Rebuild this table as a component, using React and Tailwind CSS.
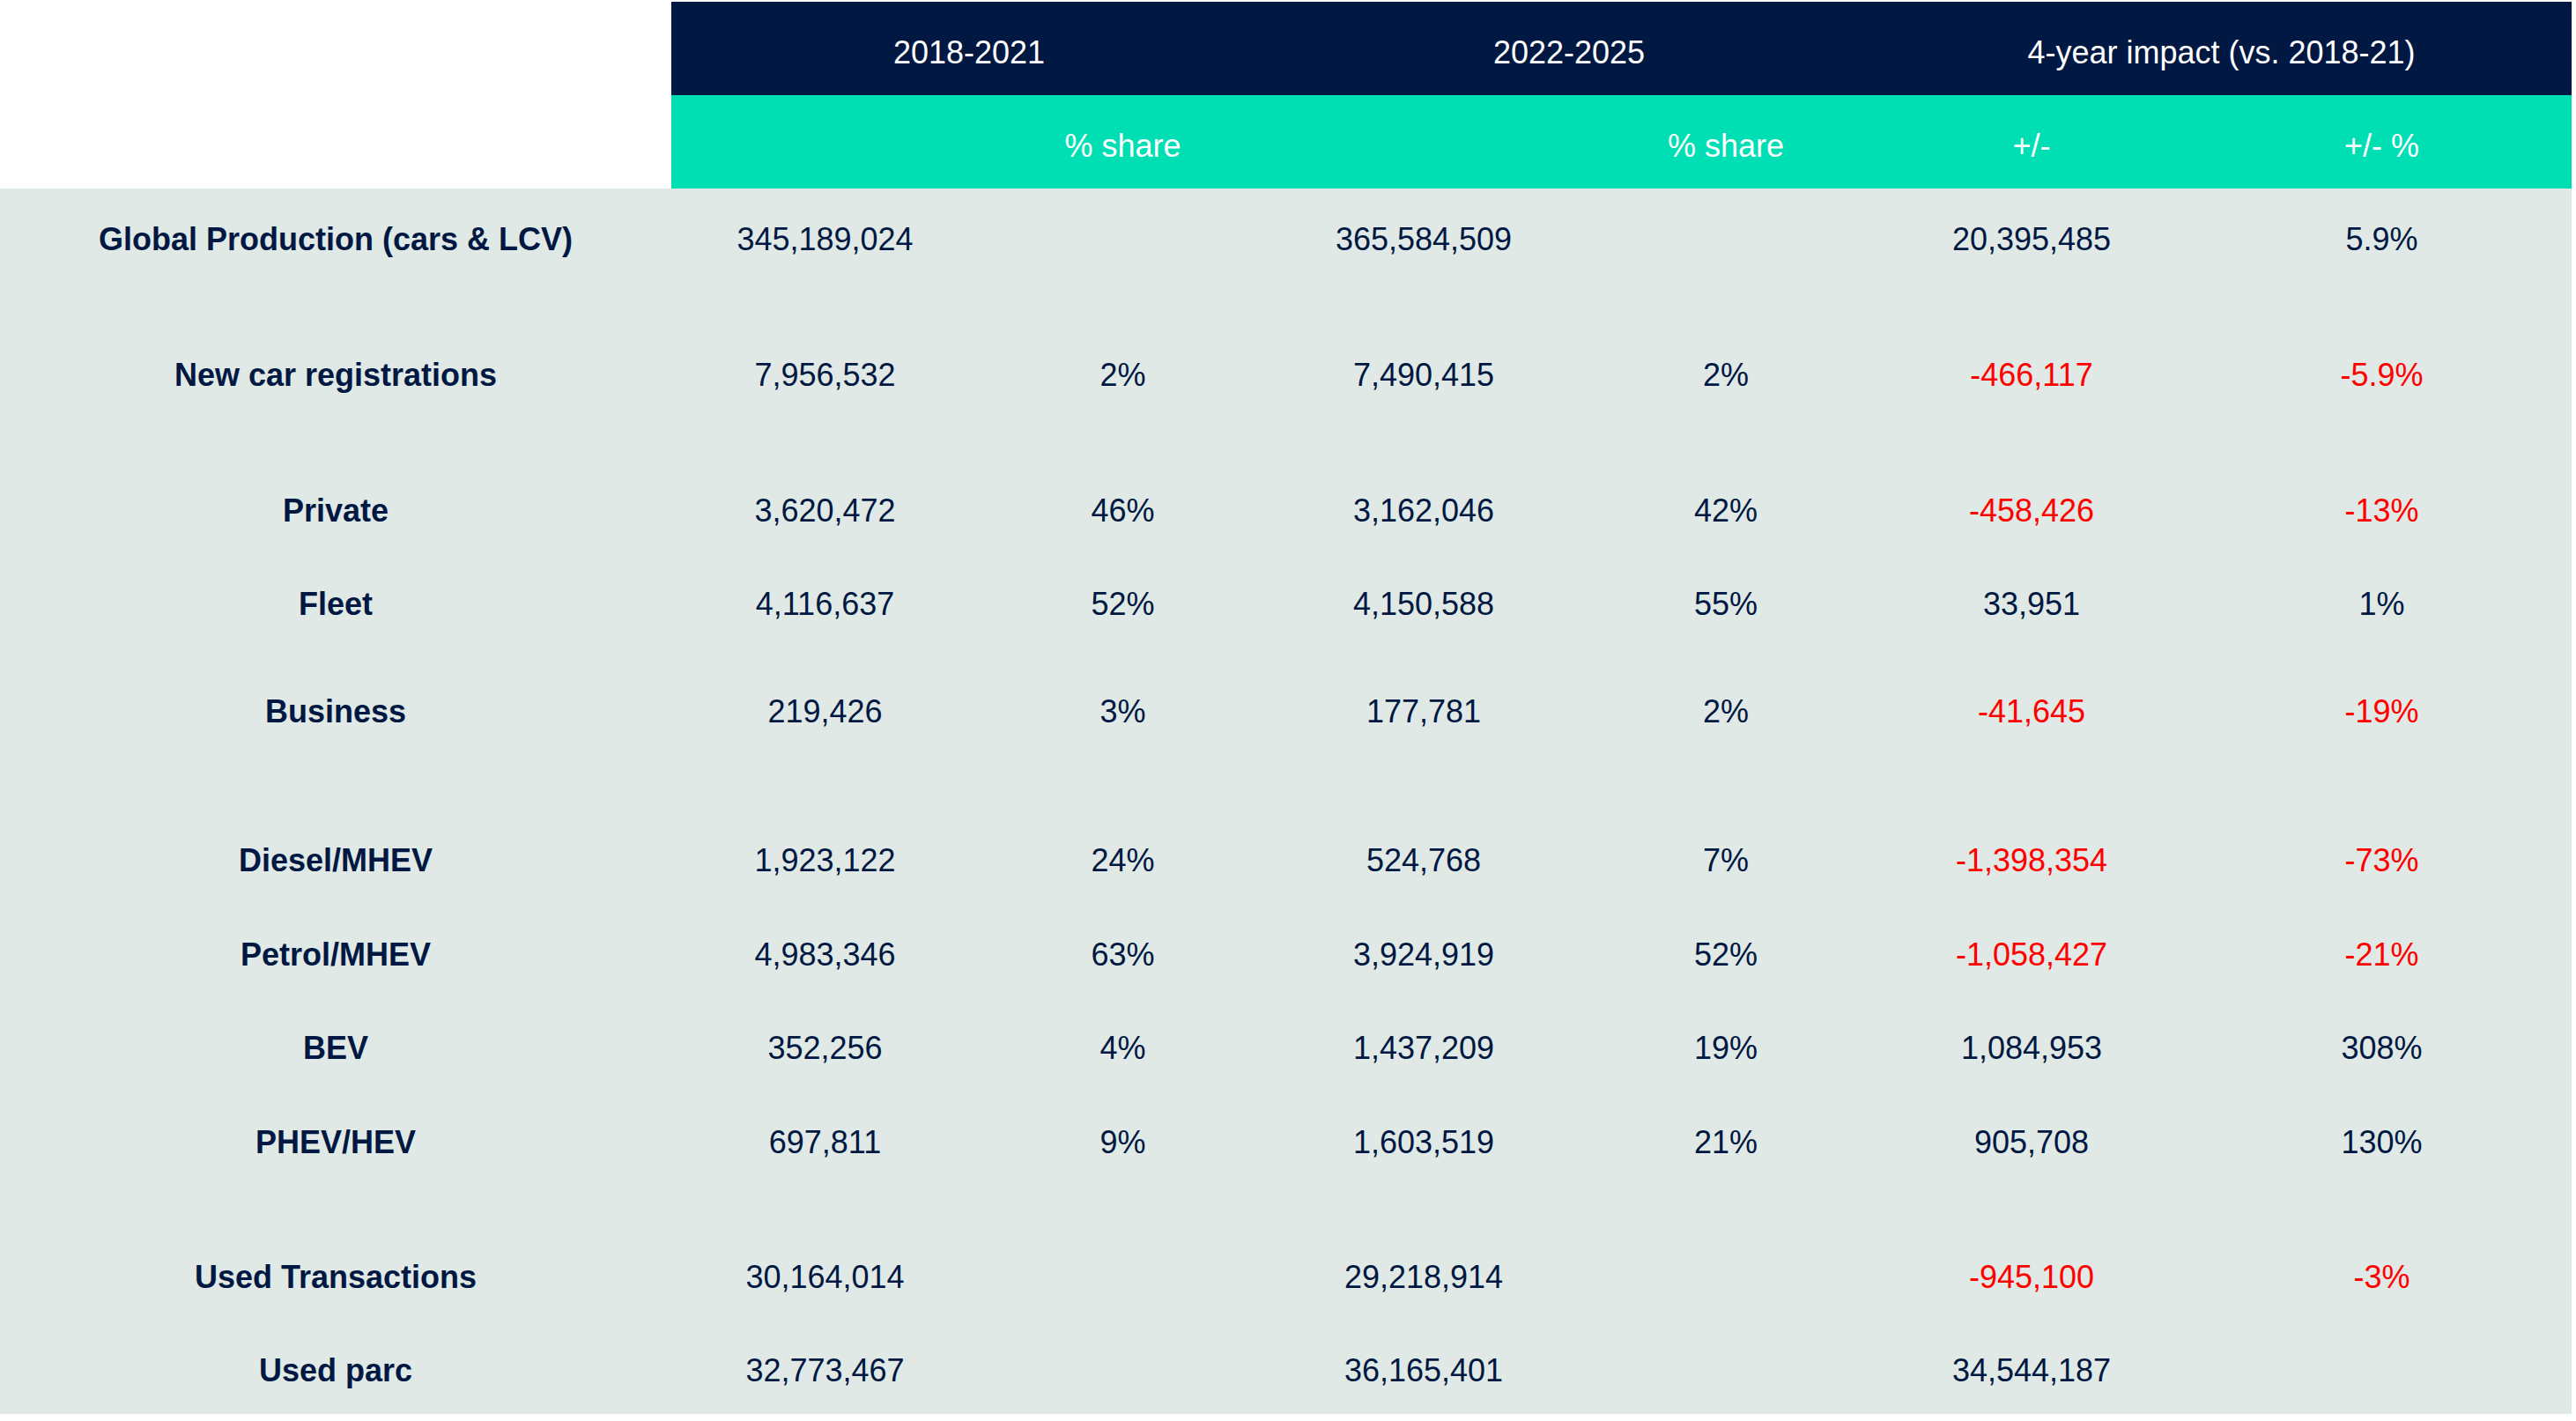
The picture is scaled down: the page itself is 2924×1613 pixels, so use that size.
import React from "react";

const NAVY = "text-[#001842]";
const RED = "text-[#ff0000]";

// Table rows: [label, v1, s1, v2, s2, diff, diffPct, negative, marginTop]
const rows = [
  { label: "Global Production (cars & LCV)", v1: "345,189,024", s1: "", v2: "365,584,509", s2: "", d: "20,395,485", dp: "5.9%", neg: false, mt: "mt-0" },
  { label: "New car registrations", v1: "7,956,532", s1: "2%", v2: "7,490,415", s2: "2%", d: "-466,117", dp: "-5.9%", neg: true, mt: "mt-[48px]" },
  { label: "Private", v1: "3,620,472", s1: "46%", v2: "3,162,046", s2: "42%", d: "-458,426", dp: "-13%", neg: true, mt: "mt-[48px]" },
  { label: "Fleet", v1: "4,116,637", s1: "52%", v2: "4,150,588", s2: "55%", d: "33,951", dp: "1%", neg: false, mt: "mt-0" },
  { label: "Business", v1: "219,426", s1: "3%", v2: "177,781", s2: "2%", d: "-41,645", dp: "-19%", neg: true, mt: "mt-[16px]" },
  { label: "Diesel/MHEV", v1: "1,923,122", s1: "24%", v2: "524,768", s2: "7%", d: "-1,398,354", dp: "-73%", neg: true, mt: "mt-[63px]" },
  { label: "Petrol/MHEV", v1: "4,983,346", s1: "63%", v2: "3,924,919", s2: "52%", d: "-1,058,427", dp: "-21%", neg: true, mt: "mt-[1px]" },
  { label: "BEV", v1: "352,256", s1: "4%", v2: "1,437,209", s2: "19%", d: "1,084,953", dp: "308%", neg: false, mt: "mt-0" },
  { label: "PHEV/HEV", v1: "697,811", s1: "9%", v2: "1,603,519", s2: "21%", d: "905,708", dp: "130%", neg: false, mt: "mt-[1px]" },
  { label: "Used Transactions", v1: "30,164,014", s1: "", v2: "29,218,914", s2: "", d: "-945,100", dp: "-3%", neg: true, mt: "mt-[47px]" },
  { label: "Used parc", v1: "32,773,467", s1: "", v2: "36,165,401", s2: "", d: "34,544,187", dp: "", neg: false, mt: "mt-0" },
];

const cols = "grid grid-cols-[762px_349px_327px_356px_330px_364px_431px]";

const Cell = ({ children, className = "" }) => (
  <div className={`flex items-center justify-center whitespace-nowrap ${className}`}>{children}</div>
);

const DataRow = ({ row }) => {
  const impact = row.neg ? RED : NAVY;
  return (
    <div className={`${cols} h-[106px] pt-[10px] ${row.mt}`}>
      <Cell className={`font-bold ${NAVY}`}>{row.label}</Cell>
      <Cell className={NAVY}>{row.v1}</Cell>
      <Cell className={NAVY}>{row.s1}</Cell>
      <Cell className={NAVY}>{row.v2}</Cell>
      <Cell className={NAVY}>{row.s2}</Cell>
      <Cell className={impact}>{row.d}</Cell>
      <Cell className={impact}>{row.dp}</Cell>
    </div>
  );
};

export default function App() {
  return (
    <div
      className="w-[2924px] h-[1613px] bg-white pt-[2px] text-[36px] leading-none"
      style={{ fontFamily: '"Liberation Sans", Arial, sans-serif' }}
    >
      <div className="w-[2919px]">
        {/* header: periods */}
        <div className={`${cols} h-[106px]`}>
          <div className="bg-white" />
          <Cell className="col-span-2 bg-[#001842] text-white pt-[10px]">2018-2021</Cell>
          <Cell className="col-span-2 bg-[#001842] text-white pt-[10px]">2022-2025</Cell>
          <Cell className="col-span-2 bg-[#001842] text-white pt-[10px]">4-year impact (vs. 2018-21)</Cell>
        </div>
        {/* header: sub columns */}
        <div className={`${cols} h-[106px]`}>
          <div className="bg-white" />
          <div className="bg-[#00deb4]" />
          <Cell className="bg-[#00deb4] text-white pt-[10px]">% share</Cell>
          <div className="bg-[#00deb4]" />
          <Cell className="bg-[#00deb4] text-white pt-[10px]">% share</Cell>
          <Cell className="bg-[#00deb4] text-white pt-[10px]">+/-</Cell>
          <Cell className="bg-[#00deb4] text-white pt-[10px]">+/- %</Cell>
        </div>
        {/* body */}
        <div className="bg-[#e0e9e6] pb-[1px]">
          {rows.map((row) => (
            <DataRow key={row.label} row={row} />
          ))}
        </div>
      </div>
    </div>
  );
}
